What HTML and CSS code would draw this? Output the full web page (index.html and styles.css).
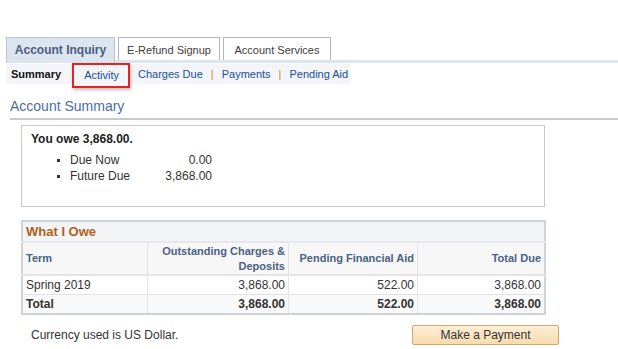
FILE: index.html
```html
<!DOCTYPE html>
<html>
<head>
<meta charset="utf-8">
<link rel="stylesheet" href="styles.css">
</head>
<body>
<div class="page">
  <div class="tabs">
    <div class="tab active">Account Inquiry</div>
    <div class="tab">E-Refund Signup</div>
    <div class="tab">Account Services</div>
  </div>
  <div class="subnav">
    <span class="sub current">Summary</span>
    <span class="sub link boxed">Activity</span>
    <span class="sub link">Charges Due</span>
    <span class="sep">|</span>
    <span class="sub link">Payments</span>
    <span class="sep">|</span>
    <span class="sub link">Pending Aid</span>
  </div>
  <h1 class="title">Account Summary</h1>
  <div class="owe-box">
    <div class="owe-head">You owe 3,868.00.</div>
    <ul class="owe-list">
      <li><span class="lbl">Due Now</span><span class="amt">0.00</span></li>
      <li><span class="lbl">Future Due</span><span class="amt">3,868.00</span></li>
    </ul>
  </div>
  <table class="grid">
    <tr class="cap"><td colspan="4">What I Owe</td></tr>
    <tr class="hdr">
      <th class="c1 left">Term</th>
      <th class="c2">Outstanding Charges &amp;<br>Deposits</th>
      <th class="c3">Pending Financial Aid</th>
      <th class="c4">Total Due</th>
    </tr>
    <tr class="row">
      <td class="left">Spring 2019</td>
      <td>3,868.00</td>
      <td>522.00</td>
      <td>3,868.00</td>
    </tr>
    <tr class="row total">
      <td class="left">Total</td>
      <td>3,868.00</td>
      <td>522.00</td>
      <td>3,868.00</td>
    </tr>
  </table>
  <div class="footer">
    <span class="currency">Currency used is US Dollar.</span>
    <span class="pay">Make a Payment</span>
  </div>
</div>
</body>
</html>
```

FILE: styles.css
```css
html, body { margin: 0; padding: 0; background: #fff; }
body { font-family: "Liberation Sans", Arial, sans-serif; font-size: 12px; color: #333; }
.page { padding: 37px 0 0 6px; width: 612px; }

.tabs { display: flex; gap: 3px; border-bottom: 3px solid #dbe6f3; height: 23px; }
.tab {
  height: 23px; box-sizing: border-box; white-space: nowrap; flex: none;
  border: 1px solid #b5b5b5; border-bottom: none;
  background: #fff; color: #3d3d3d; font-size: 11px;
  display: flex; align-items: center; justify-content: center;
  padding: 1px 0 0;
}
.tab:nth-child(2) { width: 102px; }
.tab:nth-child(3) { width: 108px; }
.tab.active {
  width: 109px; background: #dbe4ef; border-color: #b9c6d6;
  color: #4a5e82; font-weight: bold; font-size: 12px; height: 26px; margin-bottom: -3px;
  padding-bottom: 3px;
}

.subnav {
  display: flex; align-items: center; width: 344px; height: 20px;
  background: #f3f5f8; font-size: 11px; margin-top: 1px; white-space: nowrap;
}
.sub { flex: none; }
.sub.current { font-weight: bold; color: #111; margin-left: 5px; }
.sub.link { color: #1a4f9c; }
.boxed {
  margin-left: 11px; padding: 4px 9px 5px 10px; margin-top: 2px;
  border: 2px solid #e02424; box-shadow: 1px 2px 3px rgba(0,0,0,0.25);
  background: #f3f5f8;
}
.boxed + .sub { margin-left: 8px; }
.sep { color: #d9842a; margin: 0 8px 0 8px; }

.title {
  margin: 14px 0 0 4px; font-size: 14px; font-weight: normal; color: #4c6da3;
  padding-bottom: 4px; border-bottom: 2px solid #c8c8c8;
}

.owe-box {
  margin: 5px 0 0 15px; width: 524px; height: 82px; box-sizing: border-box;
  border: 1px solid #c8c8c8; padding: 6px 9px;
}
.owe-head { font-weight: bold; color: #222; font-size: 12px; }
.owe-list { list-style: square; margin: 6px 0 0 0; padding: 0 0 0 39px; }
.owe-list li { line-height: 16px; }
.owe-list li::marker { font-size: 10px; }
.lbl { display: inline-block; width: 72px; }
.amt { display: inline-block; width: 70px; text-align: right; }

.grid {
  margin: 13px 0 0 15px; width: 525px; border-collapse: collapse;
  border: 2px solid #cfd4da; font-size: 12px;
}
.grid td, .grid th { border: 1px solid #e2e4e7; padding: 0 3px; text-align: right; }
.grid .left { text-align: left; }
.cap td {
  background: #f2f4f6; color: #b0611c; font-weight: bold; font-size: 13px;
  text-align: left; height: 19px; padding: 0 3px; border-bottom: 2px solid #e6e8eb;
}
.hdr th {
  background: #f7f7f7; color: #4a6284; font-size: 11px; font-weight: bold;
  height: 31px; line-height: 15px; border-bottom: 2px solid #e2e4e7;
}
.c1 { width: 118px; } .c2 { width: 134px; } .c3 { width: 122px; }
.row td { height: 18px; color: #333; }
.row.total td { font-weight: bold; background: #f9f9f9; }

.footer { display: flex; align-items: center; margin: 10px 0 0 25px; width: 528px; justify-content: space-between; }
.currency { color: #333; font-size: 12px; }
.pay {
  width: 147px; height: 20px; box-sizing: border-box; border: 1px solid #dba46a;
  background: linear-gradient(#fdeed7, #f8dcae); color: #333; font-size: 12px;
  display: flex; align-items: center; justify-content: center; border-radius: 2px;
}
```
